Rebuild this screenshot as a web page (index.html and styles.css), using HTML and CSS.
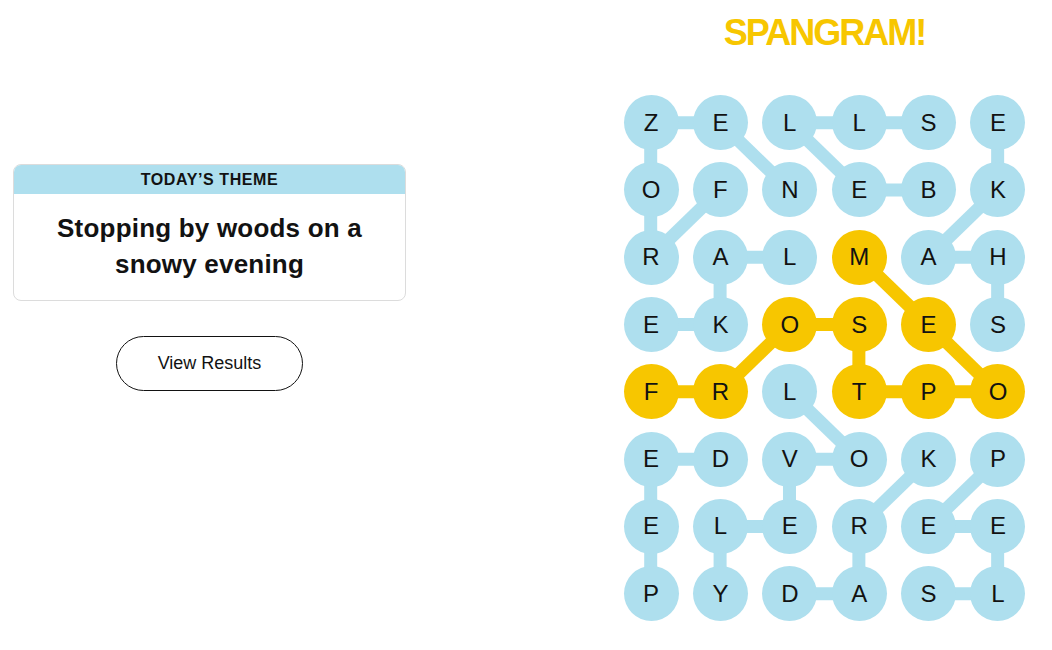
FILE: index.html
```html
<!DOCTYPE html>
<html lang="en">
<head>
  <meta charset="UTF-8">
  <meta name="viewport" content="width=device-width, initial-scale=1">
  <title>Strands</title>
  <link rel="stylesheet" href="styles.css">
</head>
<body>
  <main class="game">
    <section class="theme-panel">
      <div class="theme-card">
        <h1 class="theme-label">Today’s Theme</h1>
        <h2 class="theme-title">Stopping by woods on a snowy evening</h2>
      </div>
      <button class="results-btn">View Results</button>
    </section>

    <section class="board-panel">
      <p class="spangram-label">SPANGRAM!</p>
      <div class="board">
        <!-- found word paths, drawn behind the letters (cell units) -->
        <svg class="board-lines" viewBox="0 0 6 8" preserveAspectRatio="none">
          <g class="path-theme">
            <line x1="0.5" y1="0.5" x2="1.5" y2="0.5"/>
            <line x1="0.5" y1="0.5" x2="0.5" y2="1.5"/>
            <line x1="1.5" y1="0.5" x2="2.5" y2="1.5"/>
            <line x1="0.5" y1="1.5" x2="0.5" y2="2.5"/>
            <line x1="1.5" y1="1.5" x2="0.5" y2="2.5"/>
            <line x1="2.5" y1="0.5" x2="3.5" y2="0.5"/>
            <line x1="3.5" y1="0.5" x2="4.5" y2="0.5"/>
            <line x1="2.5" y1="0.5" x2="3.5" y2="1.5"/>
            <line x1="3.5" y1="1.5" x2="4.5" y2="1.5"/>
            <line x1="5.5" y1="0.5" x2="5.5" y2="1.5"/>
            <line x1="5.5" y1="1.5" x2="4.5" y2="2.5"/>
            <line x1="4.5" y1="2.5" x2="5.5" y2="2.5"/>
            <line x1="5.5" y1="2.5" x2="5.5" y2="3.5"/>
            <line x1="1.5" y1="2.5" x2="2.5" y2="2.5"/>
            <line x1="1.5" y1="2.5" x2="1.5" y2="3.5"/>
            <line x1="0.5" y1="3.5" x2="1.5" y2="3.5"/>
            <line x1="2.5" y1="4.5" x2="3.5" y2="5.5"/>
            <line x1="0.5" y1="5.5" x2="1.5" y2="5.5"/>
            <line x1="2.5" y1="5.5" x2="3.5" y2="5.5"/>
            <line x1="0.5" y1="5.5" x2="0.5" y2="6.5"/>
            <line x1="2.5" y1="5.5" x2="2.5" y2="6.5"/>
            <line x1="4.5" y1="5.5" x2="3.5" y2="6.5"/>
            <line x1="5.5" y1="5.5" x2="4.5" y2="6.5"/>
            <line x1="1.5" y1="6.5" x2="2.5" y2="6.5"/>
            <line x1="4.5" y1="6.5" x2="5.5" y2="6.5"/>
            <line x1="0.5" y1="6.5" x2="0.5" y2="7.5"/>
            <line x1="1.5" y1="6.5" x2="1.5" y2="7.5"/>
            <line x1="3.5" y1="6.5" x2="3.5" y2="7.5"/>
            <line x1="5.5" y1="6.5" x2="5.5" y2="7.5"/>
            <line x1="2.5" y1="7.5" x2="3.5" y2="7.5"/>
            <line x1="4.5" y1="7.5" x2="5.5" y2="7.5"/>
          </g>
          <g class="path-spangram">
            <line x1="0.5" y1="4.5" x2="1.5" y2="4.5"/>
            <line x1="1.5" y1="4.5" x2="2.5" y2="3.5"/>
            <line x1="2.5" y1="3.5" x2="3.5" y2="3.5"/>
            <line x1="3.5" y1="3.5" x2="3.5" y2="4.5"/>
            <line x1="3.5" y1="4.5" x2="4.5" y2="4.5"/>
            <line x1="4.5" y1="4.5" x2="5.5" y2="4.5"/>
            <line x1="5.5" y1="4.5" x2="4.5" y2="3.5"/>
            <line x1="4.5" y1="3.5" x2="3.5" y2="2.5"/>
          </g>
        </svg>

        <button class="cell">Z</button><button class="cell">E</button><button class="cell">L</button><button class="cell">L</button><button class="cell">S</button><button class="cell">E</button>
        <button class="cell">O</button><button class="cell">F</button><button class="cell">N</button><button class="cell">E</button><button class="cell">B</button><button class="cell">K</button>
        <button class="cell">R</button><button class="cell">A</button><button class="cell">L</button><button class="cell spangram">M</button><button class="cell">A</button><button class="cell">H</button>
        <button class="cell">E</button><button class="cell">K</button><button class="cell spangram">O</button><button class="cell spangram">S</button><button class="cell spangram">E</button><button class="cell">S</button>
        <button class="cell spangram">F</button><button class="cell spangram">R</button><button class="cell">L</button><button class="cell spangram">T</button><button class="cell spangram">P</button><button class="cell spangram">O</button>
        <button class="cell">E</button><button class="cell">D</button><button class="cell">V</button><button class="cell">O</button><button class="cell">K</button><button class="cell">P</button>
        <button class="cell">E</button><button class="cell">L</button><button class="cell">E</button><button class="cell">R</button><button class="cell">E</button><button class="cell">E</button>
        <button class="cell">P</button><button class="cell">Y</button><button class="cell">D</button><button class="cell">A</button><button class="cell">S</button><button class="cell">L</button>
      </div>
    </section>
  </main>
</body>
</html>
```

FILE: styles.css
```css
body { margin: 0; background: #fff; color: #121212; font-family: "Liberation Sans", Arial, sans-serif;}
.game { display: flex; justify-content: space-between; padding: 0 19px 0 13px;}

.theme-panel { width: 393px; padding-top: 164px; display: flex; flex-direction: column; align-items: center;}
.theme-card { width: 100%; box-sizing: border-box; border: 1px solid #dcdcdc; border-radius: 8px; overflow: hidden; text-align: center;}
.theme-label { margin: 0; background: #aedfee; height: 29px; line-height: 30px; font-size: 16px; font-weight: bold; text-transform: uppercase; letter-spacing: 0.6px;}
.theme-title { margin: 0; padding: 16px 20px 18px; font-size: 26px; line-height: 36px; font-weight: bold; letter-spacing: 0.2px;}
.results-btn { margin-top: 35px; width: 187px; height: 55px; border: 1px solid #121212; border-radius: 28px; background: #fff; color: #121212; font-family: inherit; font-size: 18px; cursor: pointer;}

.board-panel { width: 417px; display: flex; flex-direction: column; align-items: center;}
.spangram-label { margin: 0 0 34px; padding-top: 11px; font-family: "Liberation Sans", Arial, sans-serif; font-size: 36px; line-height: 44px; font-weight: bold; letter-spacing: -2px; color: #f7c600;}
.board { position: relative; display: grid; grid-template-columns: repeat(6, 69.4px); grid-template-rows: repeat(8, 67.3px); place-items: center;}
.board-lines { position: absolute; inset: 0; width: 100%; height: 100%; z-index: 0;}
.board-lines line { stroke-width: 13px; vector-effect: non-scaling-stroke;}
.path-theme { stroke: #aedfee;}
.path-spangram { stroke: #f7c600;}
.cell { position: relative; z-index: 1; width: 55px; height: 55px; padding: 0; border: none; border-radius: 50%; background: #aedfee; color: #121212; font-family: "Liberation Sans", Arial, sans-serif; font-size: 24px; cursor: pointer;}
.cell.spangram { background: #f7c600;}
```
